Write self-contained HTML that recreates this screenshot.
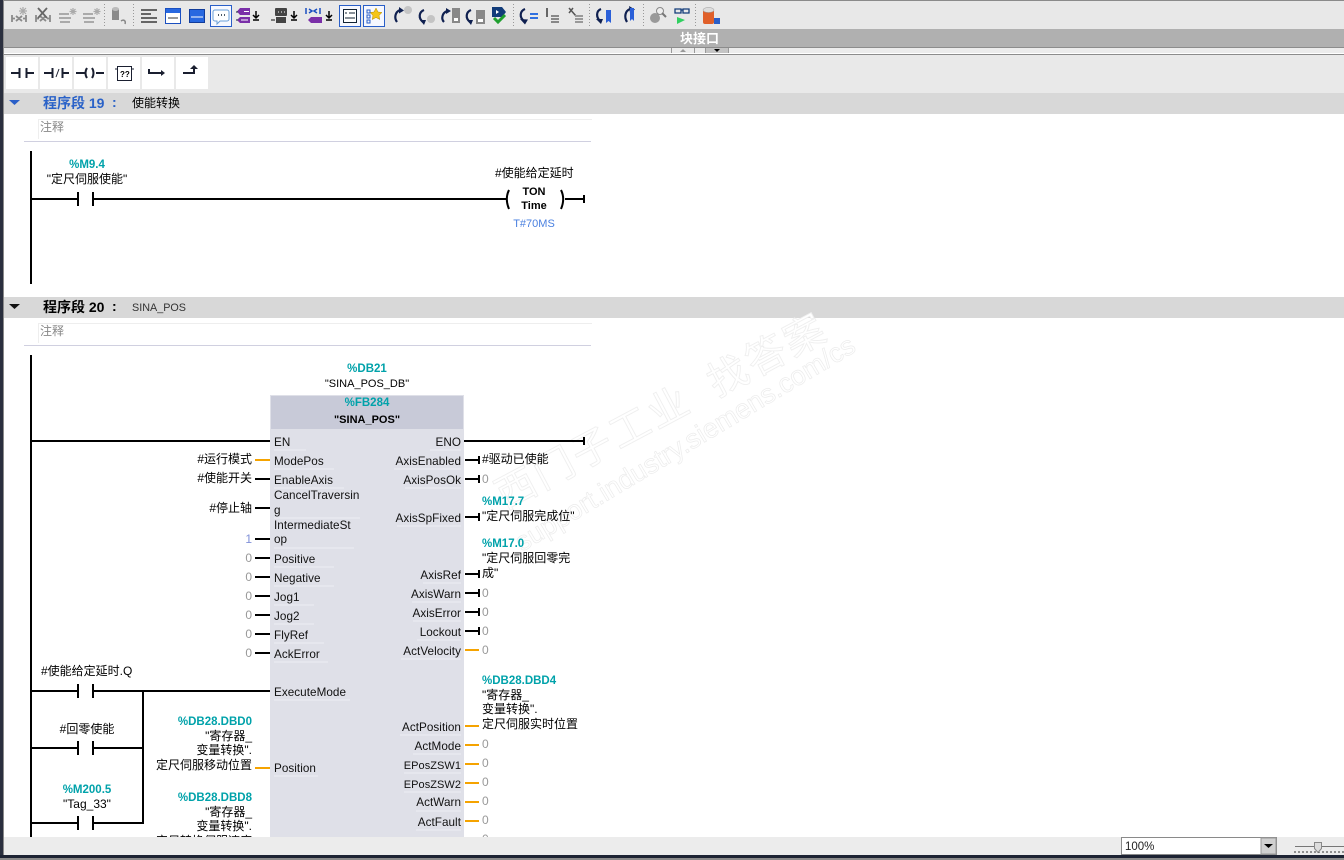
<!DOCTYPE html>
<html><head><meta charset="utf-8"><style>
html,body{margin:0;padding:0;background:#fff;width:1344px;height:860px;overflow:hidden}
svg{display:block;position:absolute;left:0;top:0}
text{font-family:"Liberation Sans","Noto Sans CJK SC",sans-serif;font-size:12px;fill:#000;white-space:pre}
.r{text-anchor:end}.c{text-anchor:middle}
.t{fill:#00a2aa;font-weight:bold;font-size:11.5px}
.g{fill:#999}
.p{fill:#111;font-size:11.7px;letter-spacing:.05px}
.w{stroke:#000;stroke-width:2;fill:none}
.o{stroke:#f5a300;stroke-width:2;fill:none}
.u{stroke:#eeeef5;stroke-width:1;fill:none}
</style></head><body>
<svg width="1344" height="860" viewBox="0 0 1344 860">
<rect width="1344" height="860" fill="#fff"/>
<!-- top toolbar -->
<rect x="0" y="0" width="1344" height="29" fill="#e8e8e8"/>
<rect x="0" y="0" width="1344" height="1" fill="#8a8a8a"/>
<rect x="0" y="29" width="1344" height="18" fill="#b0b0b0"/>
<rect x="0" y="47" width="1344" height="1" fill="#8c8c8c"/>
<rect x="0" y="48" width="1344" height="5" fill="#ececec"/>
<rect x="0" y="53" width="1344" height="1" fill="#fff"/>
<rect x="0" y="54" width="1344" height="1" fill="#8c8c8c"/>
<text x="680" y="43" style="fill:#fff;font-weight:bold;font-size:13px">块接口</text>
<path d="M671.500 48V53M694.500 48V53M705.500 48V53M728.500 48V53" stroke="#999"/>
<path d="M680 52l3-3 3 3z" fill="#999"/><rect x="706" y="48" width="22" height="5" fill="#c4c4c4"/><path d="M714 49h6l-3 3z" fill="#000"/>
<!-- separators -->
<path d="M104.500 4V27M133.500 4V27M513.500 4V27M589.500 4V27M643.500 4V27M695.500 4V27" stroke="#999" stroke-dasharray="1 2"/>
<!-- icons gray -->
<g fill="none" stroke="#8a8a8a" stroke-width="1.800">
<path d="M12 15v7M26 15v7M12 18.500h3M23 18.500h3M16 16l3 2.500-3 2.500M22 16l-3 2.500 3 2.500"/>
<path d="M36 15v7M50 15v7M36 18.500h3M47 18.500h3M40 16l3 2.500-3 2.500M46 16l-3 2.500 3 2.500"/>
<path d="M38 8l9 10M47 8l-9 10" stroke="#666"/>
<path d="M59 14h10M59 18h12M60 22h10M83 14h10M83 18h12M84 22h10" stroke-width="2" stroke="#aaa"/>
</g>
<g stroke="#aaa" stroke-width="1.200"><path d="M23 7v8M19 11h8M20 8l6 6M26 8l-6 6"/><path d="M73 8v7M69.500 11.500h7M70.500 9l5 5M75.500 9l-5 5"/><path d="M97 8v7M93.500 11.500h7M94.500 9l5 5M99.500 9l-5 5"/></g>
<path d="M112 9h7v11h-7z" fill="#8a8a8a"/><ellipse cx="115.500" cy="9" rx="3.500" ry="2" fill="#bbb"/><path d="M121 21c3-2 5 0 4 3" stroke="#888" stroke-width="1.500" fill="none"/>
<path d="M141 10h16M141 14h10M141 18h16M141 22h16" stroke="#666" stroke-width="2"/>
<rect x="165.500" y="8.500" width="15" height="15" fill="#fff" stroke="#1a4fc0"/><rect x="166" y="9" width="14" height="4" fill="#2868e0"/><path d="M168 18h10" stroke="#333"/>
<rect x="189.500" y="9.500" width="15" height="13" fill="#2868e0" stroke="#123c9a"/><path d="M191 17h12" stroke="#fff"/>
<!-- selected boxes -->
<rect x="210.500" y="5.500" width="21" height="21" fill="#f6f8ff" stroke="#2a5fc8"/>
<path d="M215 10h12a2 2 0 012 2v7a2 2 0 01-2 2h-7l-3 3v-3h-2a2 2 0 01-2-2v-7a2 2 0 012-2z" fill="#fff" stroke="#6a9fd8"/><path d="M218 15h1M221 15h1M224 15h1" stroke="#123" stroke-width="1.500"/>
<rect x="339.500" y="5.500" width="21" height="21" fill="#f6f8ff" stroke="#2a5fc8"/>
<rect x="343.500" y="9.500" width="13" height="13" fill="#fff" stroke="#123"/><path d="M345 13h2M349 13h6M345 18h10" stroke="#123"/>
<rect x="363.500" y="5.500" width="21" height="21" fill="#f6f8ff" stroke="#2a5fc8"/>
<path d="M376 8l2 4 4 .5-3 3 .8 4-3.800-2-3.800 2 .8-4-3-3 4-.5z" fill="#f5c518" stroke="#b08a00" stroke-width=".5"/><path d="M367 10h3v3h-3zM367 15h3v3h-3zM367 20h3v3h-3z" fill="none" stroke="#2a5fc8"/>
<!-- purple tag icons -->
<path d="M240 8h10v7h-10l-3-3.500zM240 17h10v6h-10l-3-3z" fill="#7a2fa8"/><path d="M244 11.500h5M241 20h7" stroke="#fff"/><path d="M236 12h2M236 20h2" stroke="#123"/>
<path d="M256 11v6M253 15l3 3 3-3M253 20h6" stroke="#000" stroke-width="1.500" fill="none"/>
<path d="M276 8h10a1 1 0 011 1v6a1 1 0 01-1 1h-10a1 1 0 01-1-1v-6a1 1 0 011-1zM276 17h10v6h-10z" fill="#444"/><path d="M278 12h1M281 12h1M284 12h1" stroke="#fff"/><path d="M271 20h4" stroke="#111"/>
<path d="M294 11v6M291 15l3 3 3-3M291 20h6" stroke="#000" stroke-width="1.500" fill="none"/>
<path d="M306 8v6M320 8v6M309 9l3 2-3 2M317 9l-3 2 3 2" stroke="#1a4fc0" stroke-width="1.500" fill="none"/><path d="M311 17h11v6h-11l-3-3z" fill="#7a2fa8"/>
<path d="M329 11v6M326 15l3 3 3-3M326 20h6" stroke="#000" stroke-width="1.500" fill="none"/>
<!-- arrows -->
<g fill="none" stroke="#0f2050" stroke-width="2.200">
<path d="M400 10c-5 2-6 8-3 12"/><path d="M424 10c-5 2-6 8-1 12"/><path d="M447 11c-5 2-6 8-3 11"/><path d="M471 10c-5 2-6 8-1 12"/>
<path d="M525 9c-5 2-6 8-1 12"/><path d="M601 9c-5 2-5 8-1 12"/><path d="M630 9c-5 2-6 8-3 13"/>
</g>
<g fill="#0f2050"><path d="M399 7l5 3.500-5 3zM420 20l6 0-2 5zM446 8l5 3-5 3zM467 20l6 0-2 5zM520 19l8 .5-3 5zM596 19l7 0-2 5zM629 6l6 3.500-5 3.500z"/></g>
<g fill="#c4c4c4"><circle cx="408" cy="10" r="4"/><circle cx="431" cy="19" r="4"/></g>
<rect x="452" y="8" width="8" height="15" fill="#888"/><rect x="476" y="10" width="9" height="14" fill="#888"/>
<path d="M454 18h4v3h-4zM478 19h5v3h-5z" fill="#fff"/>
<path d="M492 7h10l4 5-4 5h-10z" fill="#123c7a"/><path d="M496 10l3 2-3 2z" fill="#fff"/><path d="M494 18l4 4 7-7" stroke="#20a030" stroke-width="3" fill="none"/>
<path d="M530 14h8M530 18h8" stroke="#3070e0" stroke-width="2"/>
<path d="M547 8v9" stroke="#666" stroke-width="2"/><path d="M551 16h8M551 19h8M551 22h8" stroke="#888" stroke-width="2"/>
<path d="M569 8l7 8M573 8l-4 5" stroke="#555" stroke-width="1.500"/><path d="M575 16h8M575 19h8M575 22h8" stroke="#999" stroke-width="2"/>
<path d="M606 10h5v13l-2.500-2-2.500 2z" fill="#2a5fd8"/><path d="M630 8h4v13l-2-2-2 2z" fill="#2a5fd8"/>
<circle cx="655" cy="18" r="5" fill="#999"/><circle cx="660" cy="11" r="3.500" fill="#eee" stroke="#888"/><path d="M662 13l4 4" stroke="#777" stroke-width="2"/>
<path d="M675 9h6v4h-6zM683 9h6v4h-6zM681 10h2" fill="none" stroke="#123c7a" stroke-width="1.300"/><path d="M677 17l8 3-8 4z" fill="#30d060"/>
<rect x="703" y="10" width="11" height="14" rx="2" fill="#e0602a"/><ellipse cx="708.500" cy="10" rx="5.500" ry="2.500" fill="#ddd" stroke="#999" stroke-width=".5"/><rect x="714" y="18" width="6" height="6" fill="#2a5fc8"/>

<!-- lad toolbar -->
<rect x="0" y="55" width="1344" height="38" fill="#e9e9e9"/>
<g fill="#fff"><rect x="6" y="57" width="32" height="32"/><rect x="40" y="57" width="32" height="32"/><rect x="74" y="57" width="32" height="32"/><rect x="108" y="57" width="32" height="32"/><rect x="142" y="57" width="32" height="32"/><rect x="176" y="57" width="32" height="32"/></g>
<g stroke="#1a1f30" stroke-width="2" fill="none">
<path d="M11 73h8M19.500 68v10M26.500 68v10M27 73h7"/>
<path d="M44 73h8M52.500 68v10"/>
<path d="M62.500 68v10M63 73h6"/><path d="M56 77l3-8" stroke-width="1"/>
<path d="M76 73h9M96 73h8M87 68c-2 3-2 7 0 10M92 68c2 3 2 7 0 10"/>
<rect x="117.500" y="66.500" width="14" height="14" stroke-width="1"/><path d="M115 69h2M132 69h2" stroke-width="1"/>
<path d="M149 69v4h12"/>
<path d="M183 73h11v-4"/>
</g>
<text x="120" y="77" style="font-size:8px;font-weight:bold">??</text>
<path d="M161 70l4 3-4 3z" fill="#1a1f30"/><path d="M190 69l4-4 4 4z" fill="#1a1f30"/>

<!-- network headers -->
<rect x="4" y="93" width="1340" height="21" fill="#d8d8d8"/>
<rect x="4" y="297" width="1340" height="21" fill="#d8d8d8"/>
<path d="M9 100h11l-5.500 5z" fill="#2a5fc8"/>
<path d="M9 304h11l-5.500 5z" fill="#111"/>
<text x="43" y="108" style="font-size:14px;font-weight:bold;fill:#2a62c8">程序段 19</text>
<text x="112" y="107" style="font-size:14px;font-weight:bold;fill:#2a62c8">:</text>
<text x="132" y="107">使能转换</text>
<text x="43" y="312" style="font-size:14px;font-weight:bold">程序段 20</text>
<text x="112" y="311" style="font-size:14px;font-weight:bold">:</text>
<text x="132" y="311" style="font-size:10.800px;fill:#333">SINA_POS</text>
<!-- comments -->
<path d="M38 119.500H592M38.500 119V139M38 323.500H592M38.500 323V343" stroke="#eee"/>
<path d="M24 141.500H591M24 345.500H591" stroke="#d0d0e0"/>
<text x="40" y="131" style="fill:#888">注释</text>
<text x="40" y="335" style="fill:#888">注释</text>

<!-- watermark -->
<g transform="translate(505,510) rotate(-28)">
<text x="0" y="0" style="font-size:40px;fill:#fff;stroke:#efefef;stroke-width:.9;letter-spacing:3px">西门子工业</text>
<text x="240" y="0" style="font-size:40px;fill:#fff;stroke:#efefef;stroke-width:.9;letter-spacing:3px">找答案</text>
</g>
<g transform="translate(522,552) rotate(-31)">
<text x="0" y="0" style="font-size:27px;fill:#fff;stroke:#ececec;stroke-width:.7">support.industry.siemens.com/cs</text>
</g>

<!-- network 19 -->
<path d="M31 151V284" stroke="#000" stroke-width="2"/>
<path class="w" d="M31 199H78M78 192V206M93 192V206M93 199H506M565 199H584M584 195V203"/>
<path d="M509 190c-3 6-3 12 0 19M561 190c3 6 3 12 0 19" stroke="#000" stroke-width="2" fill="none"/>
<text class="t c" x="87" y="168">%M9.4</text>
<text class="c" x="87" y="183">"定尺伺服使能"</text>
<text x="495" y="177">#使能给定延时</text>
<text class="c" x="534" y="195" style="font-size:11px;font-weight:bold">TON</text>
<text class="c" x="534" y="209" style="font-size:11px;font-weight:bold">Time</text>
<text class="c" x="534" y="227" style="fill:#4a80e0;font-size:11px">T#70MS</text>

<!-- network 20 -->
<path d="M31 355V837" stroke="#000" stroke-width="2"/>
<rect x="270" y="395" width="194" height="442" fill="#dfe0e8"/>
<rect x="271" y="396" width="192" height="33" fill="#c8cad8"/>
<text class="t c" x="367" y="372">%DB21</text>
<text class="c" x="367" y="387" style="font-size:11px">"SINA_POS_DB"</text>
<text class="t c" x="367" y="406">%FB284</text>
<text class="c" x="367" y="423" style="font-weight:bold;font-size:11px">"SINA_POS"</text>

<!-- left wires -->
<path class="w" d="M31 441H270M255 479H270M255 508H270M255 539H270M255 558H270M255 577H270M255 596H270M255 615H270M255 634H270M255 653H270"/>
<path class="w" d="M31 691H78M78 684V698M93 684V698M93 691H270M143 691V824M31 748H78M78 741V755M93 741V755M93 748H143M31 823H78M78 816V830M93 816V830M93 823H144"/>
<path class="o" d="M255 460H270M255 768H270"/>
<!-- right wires -->
<path class="w" d="M464 441H584M584 437V445M465 460H480M479 456V464M465 479H480M479 475V483M465 517H480M479 513V521M465 574H480M479 570V578M465 593H480M479 589V597M465 612H480M479 608V616M465 631H480M479 627V635"/>
<path class="o" d="M465 650H479M465 726H479M465 745H479M465 764H479M465 783H479M465 802H479M465 821H479"/>

<!-- underlines -->
<path class="u" d="M274 450h32M274 469h60M274 488h70M274 518h86M274 548h80M274 567h60M274 586h60M274 605h40M274 624h40M274 643h50M274 662h54M274 700h76M274 776h44M430 450h31M394 469h67M405 488h56M397 526h64M423 583h38M412 602h49M413 621h48M417 640h44M401 659h60M400 735h61M413 754h48M404 773h57M404 792h57M416 811h45M416 830h45"/>

<!-- pins -->
<g>
<text class="p" x="274" y="446">EN</text>
<text class="p" x="274" y="465">ModePos</text>
<text class="p" x="274" y="484">EnableAxis</text>
<text class="p" x="274" y="499">CancelTraversin</text>
<text class="p" x="274" y="514">g</text>
<text class="p" x="274" y="529">IntermediateSt</text>
<text class="p" x="274" y="543">op</text>
<text class="p" x="274" y="563">Positive</text>
<text class="p" x="274" y="582">Negative</text>
<text class="p" x="274" y="601">Jog1</text>
<text class="p" x="274" y="620">Jog2</text>
<text class="p" x="274" y="639">FlyRef</text>
<text class="p" x="274" y="658">AckError</text>
<text class="p" x="274" y="696">ExecuteMode</text>
<text class="p" x="274" y="772">Position</text>
</g>
<g>
<text class="p r" x="461" y="446">ENO</text>
<text class="p r" x="461" y="465">AxisEnabled</text>
<text class="p r" x="461" y="484">AxisPosOk</text>
<text class="p r" x="461" y="522">AxisSpFixed</text>
<text class="p r" x="461" y="579">AxisRef</text>
<text class="p r" x="461" y="598">AxisWarn</text>
<text class="p r" x="461" y="617">AxisError</text>
<text class="p r" x="461" y="636">Lockout</text>
<text class="p r" x="461" y="655">ActVelocity</text>
<text class="p r" x="461" y="731">ActPosition</text>
<text class="p r" x="461" y="750">ActMode</text>
<text class="p r" x="461" y="769" style="font-size:11px">EPosZSW1</text>
<text class="p r" x="461" y="788" style="font-size:11px">EPosZSW2</text>
<text class="p r" x="461" y="806">ActWarn</text>
<text class="p r" x="461" y="826">ActFault</text>
</g>
<!-- left operands -->
<text class="r" x="252" y="463">#运行模式</text>
<text class="r" x="252" y="482">#使能开关</text>
<text class="r" x="252" y="512">#停止轴</text>
<text class="r" x="252" y="543" style="fill:#8090d8">1</text>
<text class="r g" x="252" y="562">0</text>
<text class="r g" x="252" y="581">0</text>
<text class="r g" x="252" y="600">0</text>
<text class="r g" x="252" y="619">0</text>
<text class="r g" x="252" y="638">0</text>
<text class="r g" x="252" y="657">0</text>
<text class="t r" x="252" y="725">%DB28.DBD0</text>
<text class="r" x="252" y="740">"寄存器_</text>
<text class="r" x="252" y="754">变量转换".</text>
<text class="r" x="252" y="769">定尺伺服移动位置</text>
<text class="t r" x="252" y="801">%DB28.DBD8</text>
<text class="r" x="252" y="816">"寄存器_</text>
<text class="r" x="252" y="830">变量转换".</text>
<text class="r" x="252" y="845">定尺转换伺服速度</text>
<!-- right operands -->
<text x="482" y="463">#驱动已使能</text>
<text class="g" x="482" y="483">0</text>
<text class="t" x="482" y="505">%M17.7</text>
<text x="482" y="520">"定尺伺服完成位"</text>
<text class="t" x="482" y="547">%M17.0</text>
<text x="482" y="562">"定尺伺服回零完</text>
<text x="482" y="577">成"</text>
<text class="g" x="482" y="597">0</text>
<text class="g" x="482" y="616">0</text>
<text class="g" x="482" y="635">0</text>
<text class="g" x="482" y="654">0</text>
<text class="t" x="482" y="684">%DB28.DBD4</text>
<text x="482" y="699">"寄存器_</text>
<text x="482" y="713">变量转换".</text>
<text x="482" y="728">定尺伺服实时位置</text>
<text class="g" x="482" y="748">0</text>
<text class="g" x="482" y="767">0</text>
<text class="g" x="482" y="786">0</text>
<text class="g" x="482" y="805">0</text>
<text class="g" x="482" y="824">0</text>
<text class="g" x="482" y="843">0</text>
<!-- contact labels -->
<text x="41" y="675">#使能给定延时.Q</text>
<text class="c" x="87" y="733">#回零使能</text>
<text class="t c" x="87" y="793">%M200.5</text>
<text class="c" x="87" y="808">"Tag_33"</text>

<!-- status bar -->
<rect x="0" y="837" width="1344" height="18" fill="#ececec"/>
<rect x="0" y="855" width="1344" height="3" fill="#1d2333"/>
<rect x="0" y="858" width="1344" height="2" fill="#8a8a8a"/>
<rect x="1121.500" y="837.500" width="155" height="17" fill="#fff" stroke="#8a8a8a"/>
<rect x="1261" y="838" width="15" height="16" fill="#d0d0d0" stroke="#999"/>
<path d="M1264 844h9l-4.500 4z" fill="#000"/>
<text x="1125" y="850" style="font-size:11.500px;fill:#222">100%</text>
<path d="M1295 846.500h49" stroke="#777"/>
<path d="M1295 851v2M1299 851v2M1303 851v2M1307 851v2M1311 851v2M1315 851v2M1319 851v2M1323 851v2M1327 851v2M1331 851v2M1335 851v2M1339 851v2M1343 851v2" stroke="#333"/>
<path d="M1314.500 842.500h7v6l-3.500 4-3.500-4z" fill="#ddd" stroke="#888"/>
<!-- left edge -->
<rect x="0" y="0" width="3" height="855" fill="#2a2f3e"/>
<rect x="3" y="0" width="1" height="855" fill="#8a8a8a"/>
</svg>
</body></html>
